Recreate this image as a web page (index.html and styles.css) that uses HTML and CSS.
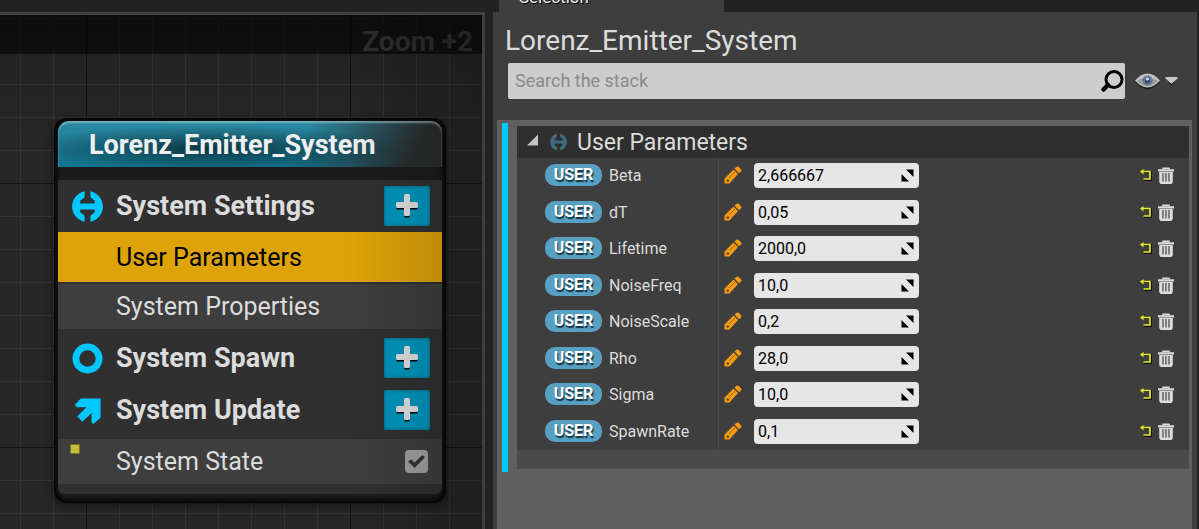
FILE: index.html
```html
<!DOCTYPE html>
<html lang="en">
<head>
<meta charset="utf-8">
<title>Lorenz_Emitter_System</title>
<link rel="stylesheet" href="styles.css">
</head>
<body>
<svg class="defs" aria-hidden="true">
  <symbol id="i-settings" viewBox="0 0 32 32"><path fill="currentColor" d="M13 .3V6.500L8.500 10V13H23.500V10L19 6.500V.3A16 16 0 0 1 19 31.700V25.500L23.500 22V19H8.500V22L13 25.500V31.700A16 16 0 0 1 13 .3Z"/></symbol>
  <symbol id="i-plus" viewBox="0 0 24 26"><path fill="#000" d="M9.500 4h5v7.500H22.500v5H14.500V24.500h-5V16.500H1.500v-5H9.500z"/><rect x="1" y="9" width="22" height="6" rx="1.500" fill="#e0e0e0"/><rect x="9" y="1" width="6" height="22" rx="1.500" fill="#e0e0e0"/></symbol>
  <symbol id="i-pencil" viewBox="0 0 18 18"><path fill="#f59b12" d="M.5 17.500V12.500L9.500 3.500 14 8 5.500 17.500zM10.500 2.500 12.500.8Q13.500 0 14.500.8L17 3.300Q18 4.500 17 5.500L15 7.200z"/><path fill="none" stroke="#8a5a14" stroke-width=".8" d="M5 12 11 6"/><circle cx="3.800" cy="14.500" r="1.200" fill="#5a4320"/></symbol>
  <symbol id="i-reset" viewBox="0 0 12 12"><path fill="none" stroke="#111" stroke-width="2" d="M2 3H11V11H4"/><path fill="none" stroke="#e3ea2c" stroke-width="1.700" d="M1 2.500H10V10H3.500"/><path fill="#e3ea2c" d="M0 2.500 3.500 0V5.500z"/></symbol>
  <symbol id="i-trash" viewBox="0 0 16 17"><path fill="none" stroke="#dcdcdc" stroke-width="1.500" d="M5 2.500V1.200H11V2.500"/><path fill="#dcdcdc" d="M0 2.300H16V4.500H0zM1.200 5H14.800V15L13.500 17H2.500L1.200 15z"/><path stroke="#505050" stroke-width="1.300" d="M5 6V14.500M8 6V14.500M11 6V14.500"/></symbol>
  <symbol id="i-drag" viewBox="0 0 13 13"><path d="M5 .5H12.500V8zM.5 5V12.500H8z"/></symbol>
</svg>
<div class="app">
  <main class="graph">
    <div class="graph-band"><span class="zoom">Zoom +2</span></div>
    <section class="node">
      <h2 class="node-title">Lorenz_Emitter_System</h2>
      <div class="node-body">
        <div class="group"><svg class="group-icon"><use href="#i-settings"/></svg><h3>System Settings</h3><button class="add" aria-label="Add to System Settings"><svg><use href="#i-plus"/></svg></button></div>
        <div class="item selected">User Parameters</div>
        <div class="item">System Properties</div>
        <div class="group spaced"><svg class="group-icon" viewBox="0 0 32 32"><circle cx="16" cy="16" r="12" fill="none" stroke="currentColor" stroke-width="7"/></svg><h3>System Spawn</h3><button class="add" aria-label="Add to System Spawn"><svg><use href="#i-plus"/></svg></button></div>
        <div class="group"><svg class="group-icon" viewBox="0 0 32 32"><path fill="currentColor" d="M9 3.700H29.500V23.500L22 30 20 28.500 20.300 18.500 10.500 27.500 5.500 22 15 12.700H5L3 10z"/></svg><h3>System Update</h3><button class="add" aria-label="Add to System Update"><svg><use href="#i-plus"/></svg></button></div>
        <div class="item state"><span class="marker"></span><label for="state">System State</label><input class="check" type="checkbox" id="state" checked></div>
      </div>
    </section>
  </main>
  <aside class="side">
    <div class="tab">Selection</div>
    <div class="panel">
      <h1>Lorenz_Emitter_System</h1>
      <div class="search-row">
        <div class="search">
          <input type="search" placeholder="Search the stack" aria-label="Search the stack">
          <svg class="lens" viewBox="0 0 24 24"><path stroke="#000" stroke-width="4.500" stroke-linecap="round" d="M3.500 20.500 8 16"/><circle cx="14" cy="10.500" r="8" fill="none" stroke="#000" stroke-width="3"/></svg>
        </div>
        <button class="view" aria-label="View options">
          <svg class="eye" viewBox="0 0 28 18"><path fill="#1c1c1c" d="M1 10Q14-5 27 10 14 25 1 10z"/><path fill="#c4c4c4" d="M1 8.500Q14-6 27 8.500 14 23 1 8.500z"/><path fill="#9a9a9a" d="M3 9Q14 1 25 9 14 20 3 9z"/><circle cx="14" cy="8.500" r="5.200" fill="#62779a"/><circle cx="14" cy="9" r="2.600" fill="#3c4a63"/><circle cx="14" cy="7" r="1.600" fill="#d5dbe5"/></svg>
          <svg class="caret" viewBox="0 0 12 9"><path fill="#111" d="M1 2H11L6 9z"/><path fill="#c8c8c8" d="M0 0H12V1.500L6 7 0 1.500z"/></svg>
        </button>
      </div>
      <div class="stack">
        <div class="entry">
          <button class="section"><svg class="tri" viewBox="0 0 12 12"><path fill="#c4c4c4" d="M12 0V12H0z"/></svg><svg class="section-icon"><use href="#i-settings"/></svg>User Parameters</button>
          <div class="params">
            <div class="param"><div class="name"><span class="badge">USER</span><label for="p1">Beta</label></div><svg class="pencil"><use href="#i-pencil"/></svg><div class="value"><input id="p1" value="2,666667"><svg><use href="#i-drag"/></svg></div><button class="tool reset" aria-label="Reset Beta"><svg><use href="#i-reset"/></svg></button><button class="tool trash" aria-label="Delete Beta"><svg><use href="#i-trash"/></svg></button></div>
            <div class="param"><div class="name"><span class="badge">USER</span><label for="p2">dT</label></div><svg class="pencil"><use href="#i-pencil"/></svg><div class="value"><input id="p2" value="0,05"><svg><use href="#i-drag"/></svg></div><button class="tool reset" aria-label="Reset dT"><svg><use href="#i-reset"/></svg></button><button class="tool trash" aria-label="Delete dT"><svg><use href="#i-trash"/></svg></button></div>
            <div class="param"><div class="name"><span class="badge">USER</span><label for="p3">Lifetime</label></div><svg class="pencil"><use href="#i-pencil"/></svg><div class="value"><input id="p3" value="2000,0"><svg><use href="#i-drag"/></svg></div><button class="tool reset" aria-label="Reset Lifetime"><svg><use href="#i-reset"/></svg></button><button class="tool trash" aria-label="Delete Lifetime"><svg><use href="#i-trash"/></svg></button></div>
            <div class="param"><div class="name"><span class="badge">USER</span><label for="p4">NoiseFreq</label></div><svg class="pencil"><use href="#i-pencil"/></svg><div class="value"><input id="p4" value="10,0"><svg><use href="#i-drag"/></svg></div><button class="tool reset" aria-label="Reset NoiseFreq"><svg><use href="#i-reset"/></svg></button><button class="tool trash" aria-label="Delete NoiseFreq"><svg><use href="#i-trash"/></svg></button></div>
            <div class="param"><div class="name"><span class="badge">USER</span><label for="p5">NoiseScale</label></div><svg class="pencil"><use href="#i-pencil"/></svg><div class="value"><input id="p5" value="0,2"><svg><use href="#i-drag"/></svg></div><button class="tool reset" aria-label="Reset NoiseScale"><svg><use href="#i-reset"/></svg></button><button class="tool trash" aria-label="Delete NoiseScale"><svg><use href="#i-trash"/></svg></button></div>
            <div class="param"><div class="name"><span class="badge">USER</span><label for="p6">Rho</label></div><svg class="pencil"><use href="#i-pencil"/></svg><div class="value"><input id="p6" value="28,0"><svg><use href="#i-drag"/></svg></div><button class="tool reset" aria-label="Reset Rho"><svg><use href="#i-reset"/></svg></button><button class="tool trash" aria-label="Delete Rho"><svg><use href="#i-trash"/></svg></button></div>
            <div class="param"><div class="name"><span class="badge">USER</span><label for="p7">Sigma</label></div><svg class="pencil"><use href="#i-pencil"/></svg><div class="value"><input id="p7" value="10,0"><svg><use href="#i-drag"/></svg></div><button class="tool reset" aria-label="Reset Sigma"><svg><use href="#i-reset"/></svg></button><button class="tool trash" aria-label="Delete Sigma"><svg><use href="#i-trash"/></svg></button></div>
            <div class="param"><div class="name"><span class="badge">USER</span><label for="p8">SpawnRate</label></div><svg class="pencil"><use href="#i-pencil"/></svg><div class="value"><input id="p8" value="0,1"><svg><use href="#i-drag"/></svg></div><button class="tool reset" aria-label="Reset SpawnRate"><svg><use href="#i-reset"/></svg></button><button class="tool trash" aria-label="Delete SpawnRate"><svg><use href="#i-trash"/></svg></button></div>
          </div>
          <div class="entry-foot"></div>
        </div>
      </div>
    </div>
  </aside>
</div>
</body>
</html>
```
FILE: styles.css
```css
* { box-sizing: border-box; }
body { margin: 0; background: #222; color: #dcdcdc; font-family: Roboto, "Liberation Sans", sans-serif; overflow: hidden; }
h1, h2, h3 { margin: 0; }
button { border: 0; padding: 0; background: none; color: inherit; font: inherit; }
svg { display: block; flex: none; }
.defs { position: absolute; width: 0; height: 0; }
.app { display: grid; grid-template-columns: 485fr 704fr; column-gap: 8px; height: 100vh; padding-right: 2px; }

.graph {
  position: relative; overflow: hidden; margin-top: 12px;
  border: solid #3f3f3f; border-width: 3px 3px 0 0;
  background-color: #262626;
  background-image:
    linear-gradient(90deg, #111 1px, transparent 1px),
    linear-gradient(#111 1px, transparent 1px),
    linear-gradient(90deg, #343434 1px, transparent 1px),
    linear-gradient(#343434 1px, transparent 1px);
  background-size: 264px 264px, 264px 264px, 33px 33px, 33px 33px;
  background-position: 86px 0, 0 168px, 20px 0, 0 3px;
}
.graph::after {
  content: ""; position: absolute; inset: 0; pointer-events: none;
  background: linear-gradient(90deg, transparent 72%, rgba(0, 0, 0, .2)), linear-gradient(rgba(0, 0, 0, .12), transparent 25%);
}
.graph-band { display: flex; justify-content: flex-end; align-items: center; height: 39px; padding: 14px 9px 0 0; background: rgba(0, 0, 0, .6); }
.zoom { color: #303030; font-size: 28px; font-weight: 700; line-height: 24px; }

.node {
  position: absolute; left: 54px; top: 103px; width: 392px;
  padding: 3px 4px 9px; border-radius: 13px;
  background: #1b1c1b; box-shadow: inset 0 0 5px 3px #030303, 0 2px 8px rgba(0, 0, 0, .5);
}
.node-title {
  height: 46px; padding-left: 31px; border-radius: 11px 11px 0 0; color: #f0f0f0;
  font-size: 27px; font-weight: 700; line-height: 49px;
  background:
    radial-gradient(ellipse 50% 50% at 40% 60%, rgba(8, 36, 45, .8), transparent),
    linear-gradient(115deg, transparent 62%, #2a2c2c 92%),
    linear-gradient(#2d8ca5, #117590);
  box-shadow: inset 0 2px 2px rgba(190, 220, 225, .55);
}
.node-body { margin-top: 13px; padding-bottom: 10px; background: #303030; border-radius: 0 0 6px 6px; }
.group { display: flex; align-items: center; height: 52px; padding: 0 12px 0 14px; }
.group h3 { flex: 1; font-size: 27px; line-height: 52px; }
.group-icon { width: 31px; height: 31px; margin-right: 13px; color: #00c8ff; }
.spaced { margin-top: 3px; }
.add { display: flex; align-items: center; justify-content: center; width: 46px; height: 40px; padding-bottom: 1px; background: #0096be; border-radius: 2px; box-shadow: inset 0 0 3px 1px #08708d; }
.add svg { width: 24px; height: 26px; }
.item { display: flex; align-items: center; height: 45px; padding: 0 14px 0 58px; background: #3e3e3e; font-size: 25px; }
.selected { height: 50px; margin-bottom: 2px; background: #dea309; color: #000; }
.state { position: relative; margin-top: 3px; }
.state label { flex: 1; }
.marker { position: absolute; left: 12px; top: 5px; width: 10px; height: 10px; background: #c5bd3b; border: 1px solid #77721f; border-radius: 1px; }
.check { appearance: none; display: grid; place-items: center; width: 23px; height: 23px; margin: 0; border-radius: 4px; background: #a0a0a0; }
.check:checked::before { content: ""; width: 17px; height: 13px; background: #343434; clip-path: polygon(0 50%, 18% 32%, 38% 58%, 84% 0, 100% 18%, 39% 100%); }

.side { display: flex; flex-direction: column; min-width: 0; }
.tab { display: flex; align-items: flex-end; width: 225px; height: 12px; margin-left: 6px; padding: 0 20px 5px; background: #3e3e3e; color: #ececec; font-size: 17px; line-height: 20px; text-shadow: 1px 1px #000; }
.panel { flex: 1; display: flex; flex-direction: column; padding: 12px 5px 0 4px; background: #3e3e3e; }
h1 { padding-left: 8px; font-size: 28px; font-weight: 400; line-height: 33px; }
.search-row { display: flex; align-items: center; gap: 9px; margin: 6px 14px 21px 11px; }
.search { display: flex; align-items: center; flex: 1; height: 36px; padding: 0 1px 1px 7px; border-radius: 2px; background: #cdcdcd; }
.search input { flex: 1; min-width: 0; padding: 0; border: 0; outline: 0; background: none; font: 18px Roboto, "Liberation Sans", sans-serif; appearance: none; }
.search input::placeholder { color: #8a8a8a; }
.lens { width: 24px; height: 24px; }
.view { display: flex; align-items: center; gap: 4px; }
.eye { width: 27px; height: 18px; }
.caret { width: 13px; height: 9px; }

.stack { flex: 1; padding: 3px 3px 0 5px; background: #606060; }
.entry { padding: 3px 0 3px 9px; border-left: 6px solid #00c8ff; }
.section { display: flex; align-items: center; width: 100%; height: 32px; padding-left: 10px; background: #2f2f2f; font-size: 23px; text-align: left; }
.tri { width: 11px; height: 12px; margin: 0 12px 4px 0; }
.section-icon { width: 17px; height: 18px; margin-right: 10px; color: #426980; }
.params { background: #3e3e3e linear-gradient(#4a4a4a, #4a4a4a) 201px 0 / 1px 100% no-repeat; }
.param { display: flex; align-items: center; height: 37px; padding: 0 15px 3px 28px; }
.param:nth-child(even) { height: 36px; padding-bottom: 2px; }
.name { display: flex; align-items: center; gap: 7px; width: 173px; font-size: 16px; }
.badge { width: 57px; height: 22px; border-radius: 10px; background: #58a0c2; color: #fff; font-size: 16px; font-weight: 700; line-height: 22px; text-align: center; text-shadow: 1px 2px 1px #102f3f; }
.pencil { width: 18px; height: 18px; margin: 0 12px 0 6px; }
.value { display: flex; align-items: center; width: 165px; height: 25px; padding: 0 5px 0 4px; margin-right: auto; border-radius: 4px; background: #e6e6e6; }
.value input { flex: 1; min-width: 0; padding: 0; border: 0; outline: 0; background: none; color: #000; font: 16px Roboto, "Liberation Sans", sans-serif; }
.value svg { width: 13px; height: 13px; }
.reset svg { width: 12px; height: 12px; margin-right: 6px; }
.trash svg { width: 16px; height: 17px; }
.entry-foot { height: 19px; background: #4b4b4b; }
```
